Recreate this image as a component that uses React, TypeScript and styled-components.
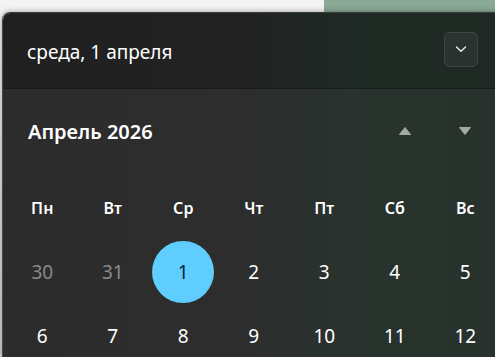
import React from "react";
import styled, { createGlobalStyle } from "styled-components";

const Global = createGlobalStyle`
  html, body { margin: 0; padding: 0; overflow: hidden; }
  body { width: 495px; height: 357px; font-family: "Noto Sans", "Open Sans", sans-serif; }
`;

const Desktop = styled.div`
  width: 495px;
  height: 357px;
  overflow: hidden;
  background:
    linear-gradient(to right, transparent 0 324px, #8aa996 324px),
    linear-gradient(to bottom, #f4f4f4, #d2d2d2);
  display: flex;
  flex-direction: column;
`;

const Panel = styled.div`
  margin: 12px -20px 0 2px;
  flex: 1;
  border-radius: 8px 0 0 0;
  border-left: 1px solid #4a4a4a;
  border-top: 1px solid #3c3c3c;
  overflow: hidden;
  display: flex;
  flex-direction: column;
  box-shadow: 0 0 6px rgba(0, 0, 0, 0.35);
`;

const Header = styled.div`
  height: 76px;
  flex: none;
  box-sizing: border-box;
  padding: 0 37px 0 24px;
  display: flex;
  align-items: center;
  justify-content: space-between;
  background: linear-gradient(to right, #202020 0, #212221 230px, #1f2a25 360px, #1e2923 100%);
  border-bottom: 1px solid #1a1c1b;
`;

const DateText = styled.span`
  color: #ffffff;
  font-size: 19px;
  font-weight: 400;
  padding-top: 3px;
`;

const ExpandButton = styled.div`
  width: 34px;
  height: 35px;
  box-sizing: border-box;
  margin-top: -3px;
  border-radius: 5px;
  background: #2a332f;
  border: 1px solid #3b4541;
  display: flex;
  align-items: center;
  justify-content: center;
`;

const Body = styled.div`
  flex: 1;
  background: linear-gradient(to right, #2c2c2c 0, #2c2d2c 230px, #29332e 360px, #28322d 100%);
  padding: 0 0 0 4px;
  display: flex;
  flex-direction: column;
`;

const MonthRow = styled.div`
  height: 87px;
  box-sizing: border-box;
  padding: 0 30px 3px 21px;
  display: flex;
  align-items: center;
  justify-content: space-between;
`;

const MonthTitle = styled.span`
  color: #ffffff;
  font-size: 20px;
  font-weight: 600;
`;

const ArrowGroup = styled.div`
  display: flex;
  gap: 20px;
`;

const ArrowButton = styled.div`
  width: 40px;
  height: 30px;
  display: flex;
  align-items: center;
  justify-content: center;
`;

const Grid = styled.div`
  display: grid;
  grid-template-columns: repeat(7, 70.5px);
  grid-auto-rows: 64px;
`;

const WeekDay = styled.div`
  display: flex;
  align-items: center;
  justify-content: center;
  color: #ffffff;
  font-size: 16px;
  font-weight: 600;
`;

const Day = styled.div`
  display: flex;
  align-items: center;
  justify-content: center;
`;

const DayLabel = styled.span<{ $muted?: boolean; $today?: boolean }>`
  width: 62px;
  height: 62px;
  border-radius: 50%;
  display: flex;
  align-items: center;
  justify-content: center;
  font-size: 19px;
  background: ${(p) => (p.$today ? "#60cdff" : "transparent")};
  color: ${(p) => (p.$today ? "#06263a" : p.$muted ? "#8a8a8a" : "#ffffff")};
`;

const weekDays = ["Пн", "Вт", "Ср", "Чт", "Пт", "Сб", "Вс"];
const days: { n: number; muted?: boolean; today?: boolean }[] = [
  { n: 30, muted: true },
  { n: 31, muted: true },
  { n: 1, today: true },
  { n: 2 },
  { n: 3 },
  { n: 4 },
  { n: 5 },
  { n: 6 },
  { n: 7 },
  { n: 8 },
  { n: 9 },
  { n: 10 },
  { n: 11 },
  { n: 12 },
];

export default function App() {
  return (
    <>
      <Global />
      <Desktop>
        <Panel>
          <Header>
            <DateText>среда, 1 апреля</DateText>
            <ExpandButton>
              <svg width="12" height="8" viewBox="0 0 12 8">
                <path d="M1.5 2 L6 6.2 L10.5 2" fill="none" stroke="#e8ece9" strokeWidth="1.4" strokeLinecap="round" strokeLinejoin="round" />
              </svg>
            </ExpandButton>
          </Header>
          <Body>
            <MonthRow>
              <MonthTitle>Апрель 2026</MonthTitle>
              <ArrowGroup>
                <ArrowButton>
                  <svg width="14" height="10" viewBox="0 0 14 10">
                    <path d="M7 1.5 L12.5 8.5 L1.5 8.5 Z" fill="#a3aaa6" stroke="#a3aaa6" strokeWidth="1" strokeLinejoin="round" />
                  </svg>
                </ArrowButton>
                <ArrowButton>
                  <svg width="14" height="10" viewBox="0 0 14 10">
                    <path d="M1.5 1.5 L12.5 1.5 L7 8.5 Z" fill="#a3aaa6" stroke="#a3aaa6" strokeWidth="1" strokeLinejoin="round" />
                  </svg>
                </ArrowButton>
              </ArrowGroup>
            </MonthRow>
            <Grid>
              {weekDays.map((d) => (
                <WeekDay key={d}>{d}</WeekDay>
              ))}
              {days.map((d) => (
                <Day key={d.n + (d.muted ? "m" : "")}>
                  <DayLabel $muted={d.muted} $today={d.today}>
                    {d.n}
                  </DayLabel>
                </Day>
              ))}
            </Grid>
          </Body>
        </Panel>
      </Desktop>
    </>
  );
}
